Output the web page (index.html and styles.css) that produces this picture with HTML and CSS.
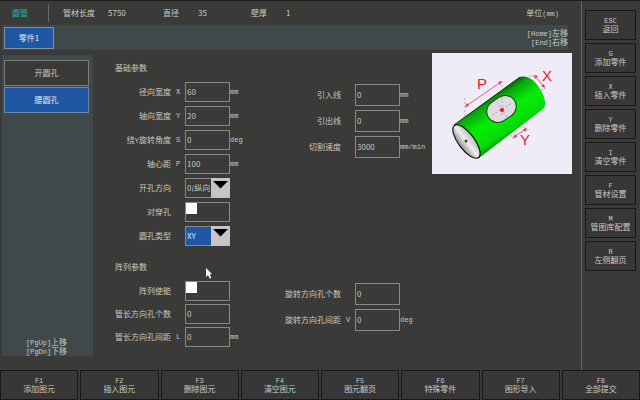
FILE: index.html
```
<!DOCTYPE html>
<html lang="zh-CN">
<head>
<meta charset="utf-8">
<title>圆管</title>
<link rel="stylesheet" href="styles.css">
</head>
<body>
<div class="upper">
  <div class="workspace">
    <header class="status">
      <h1 class="shape">圆管</h1>
      <dl class="specs">
        <div class="spec spec-long"><dt>管材长度</dt><dd>5750</dd></div>
        <div class="spec"><dt>直径</dt><dd>35</dd></div>
        <div class="spec"><dt>壁厚</dt><dd>1</dd></div>
      </dl>
      <p class="unit-note">单位<span class="mono">(mm)</span></p>
    </header>
    <nav class="tabs">
      <button class="tab" type="button">零件1</button>
      <p class="hint hint-right"><span class="mono">[Home]</span>左移<br><span class="mono">[End]</span>右移</p>
    </nav>
    <div class="body">
      <aside class="holes">
        <button class="hole" type="button">开圆孔</button>
        <button class="hole active" type="button">腰圆孔</button>
        <p class="hint hint-bottom"><span class="mono">[PgUp]</span>上移<br><span class="mono">[PgDn]</span>下移</p>
      </aside>
      <form class="params">
        <section>
          <h2>基础参数</h2>
          <div class="columns">
            <div class="fields">
              <div class="field"><label for="bx">径向宽度</label><span class="key mono">X</span><input id="bx" type="text" value="60"><span class="mono">mm</span></div>
              <div class="field"><label for="by">轴向宽度</label><span class="key mono">Y</span><input id="by" type="text" value="20"><span class="mono">mm</span></div>
              <div class="field"><label for="bs">绕<span class="mono">Y</span>旋转角度</label><span class="key mono">S</span><input id="bs" type="text" value="0"><span class="mono">deg</span></div>
              <div class="field"><label for="bp">轴心距</label><span class="key mono">P</span><input id="bp" type="text" value="100"><span class="mono">mm</span></div>
              <div class="field"><label for="dir">开孔方向</label><span class="key"></span><span class="drop"><select id="dir"><option>0(纵向</option></select><svg viewBox="0 0 19 20" aria-hidden="true"><path d="M2 3h15L9.500 10.500z"/></svg></span></div>
              <div class="field"><label for="thru">对穿孔</label><span class="key"></span><input id="thru" class="tick" type="checkbox"></div>
              <div class="field"><label for="kind">圆孔类型</label><span class="key"></span><span class="drop selected"><select id="kind"><option>XY</option></select><svg viewBox="0 0 19 20" aria-hidden="true"><path d="M2 3h15L9.500 10.500z"/></svg></span></div>
            </div>
            <div class="fields wide">
              <div class="field"><label for="lin">引入线</label><span class="key"></span><input id="lin" type="text" value="0"><span class="mono">mm</span></div>
              <div class="field"><label for="lout">引出线</label><span class="key"></span><input id="lout" type="text" value="0"><span class="mono">mm</span></div>
              <div class="field"><label for="speed">切割速度</label><span class="key"></span><input id="speed" type="text" value="3000"><span class="mono">mm/min</span></div>
            </div>
          </div>
        </section>
        <section>
          <h2>阵列参数</h2>
          <div class="columns">
            <div class="fields tight">
              <div class="field"><label for="arr">阵列使能</label><span class="key"></span><input id="arr" class="tick" type="checkbox"></div>
              <div class="field"><label for="ln">管长方向孔个数</label><span class="key"></span><input id="ln" type="text" value="0"></div>
              <div class="field"><label for="ll">管长方向孔间距</label><span class="key mono">L</span><input id="ll" type="text" value="0"><span class="mono">mm</span></div>
            </div>
            <div class="fields wide">
              <div class="field"><label for="rn">旋转方向孔个数</label><span class="key"></span><input id="rn" type="text" value="0"></div>
              <div class="field"><label for="rv">旋转方向孔间距</label><span class="key mono">V</span><input id="rv" type="text" value="0"><span class="mono">deg</span></div>
            </div>
          </div>
        </section>
      </form>
      <figure class="preview">
        <svg viewBox="0 0 140 121" role="img" aria-label="腰圆孔">
          <defs>
            <linearGradient id="tube" x1="45" y1="50" x2="72" y2="92" gradientUnits="userSpaceOnUse">
              <stop offset="0" stop-color="#064f08"/><stop offset=".15" stop-color="#08a90b"/><stop offset=".45" stop-color="#04ee05"/><stop offset=".8" stop-color="#05dc08"/><stop offset="1" stop-color="#0a7a0c"/>
            </linearGradient>
            <linearGradient id="bore" x1="0" y1="0" x2="1" y2="0"><stop offset="0" stop-color="#8d8d90"/><stop offset=".5" stop-color="#eee"/><stop offset="1" stop-color="#bbb"/></linearGradient>
          </defs>
          <path d="M22 72L88 24C95 22 103 27 108 36C113 44 115 52 111 56L47 105C40 105 21 82 22 72z" fill="url(#tube)"/>
          <path d="M22 72L88 24" fill="none" stroke="#073b08"/>
          <ellipse cx="34.500" cy="88.500" rx="8" ry="20" transform="rotate(-37 34.500 88.500)" fill="url(#bore)" stroke="#111" stroke-width="1.200"/>
          <circle cx="34" cy="88" r="1.500" fill="#4a3a20"/>
          <rect x="54" y="45" width="31" height="22" rx="11" transform="rotate(-34 69.500 56)" fill="#dedce0" stroke="#173d18"/>
          <path d="M70 28V62M60 62L80 50M65 49l10 15M33 45V63" stroke="#888" stroke-width=".6" stroke-dasharray="2 2" fill="none"/>
          <circle cx="70" cy="57" r="2" fill="#f01020"/>
          <g stroke="#e33a4d" fill="#e33a4d" stroke-width=".8">
            <path d="M34 53L69 29M103 23L112 34M82 84L94 76"/>
            <path d="M33 54l2-4 2 3zM70 28l-4 1 2 3zM102 22l4 1-3 3zM113 35l-1-4-3 2zM81 85l2-4 2 3zM95 75l-4 1 2 3z" stroke="none"/>
          </g>
          <path d="M97 23h5M109 37l5-2M79 82l3 4M92 74l4 4" stroke="#888" stroke-width=".7" stroke-dasharray="2 1"/>
          <text x="45" y="36">P</text><text x="110" y="28">X</text><text x="88" y="92">Y</text>
        </svg>
      </figure>
    </div>
  </div>
  <nav class="side">
    <button type="button"><span class="mono">ESC</span>返回</button>
    <button type="button"><span class="mono">G</span>添加零件</button>
    <button type="button"><span class="mono">X</span>插入零件</button>
    <button type="button"><span class="mono">Y</span>删除零件</button>
    <button type="button"><span class="mono">I</span>清空零件</button>
    <button type="button"><span class="mono">F</span>管材设置</button>
    <button type="button"><span class="mono">M</span>管图库配置</button>
    <button type="button"><span class="mono">R</span>左侧翻页</button>
  </nav>
</div>
<nav class="keys">
  <button type="button"><span class="mono">F1</span>添加图元</button>
  <button type="button"><span class="mono">F2</span>插入图元</button>
  <button type="button"><span class="mono">F3</span>删除图元</button>
  <button type="button"><span class="mono">F4</span>清空图元</button>
  <button type="button"><span class="mono">F5</span>图元翻页</button>
  <button type="button"><span class="mono">F6</span>特殊零件</button>
  <button type="button"><span class="mono">F7</span>图形导入</button>
  <button type="button"><span class="mono">F8</span>全部提交</button>
</nav>
<svg class="pointer" viewBox="0 0 7 11" aria-hidden="true"><path d="M0 0V9L2 7L4 11L5 10L4 6H6z"/></svg>
</body>
</html>
```
FILE: styles.css
```
* { box-sizing: border-box; margin: 0; padding: 0; }

body {
  display: flex;
  flex-direction: column;
  min-height: 100vh;
  background: #3a3b38;
  border-top: 1px solid #1b1c1b;
  color: #c6c9c5;
  font: 8px/8px "Noto Sans CJK SC", sans-serif;
}

button, input, select { font: inherit; color: inherit; border-radius: 0; }
h1, h2 { font: inherit; }
.mono { font-family: "Liberation Mono", monospace; font-size: 7px; }

.upper { display: flex; flex: 1; }
.workspace { display: flex; flex: 1; flex-direction: column; padding-left: 2px; }

.status { display: flex; align-items: center; height: 24px; padding: 0 22px 0 10px; }
.shape { width: 37px; height: 18px; line-height: 18px; border-right: 1px solid #666a67; color: #1fb5ae; }
.specs { display: flex; flex: 1; padding-left: 14px; }
.spec { display: flex; gap: 19px; width: 88px; }
.spec-long { gap: 13px; width: 100px; }

.tabs { display: flex; align-items: center; justify-content: space-between; height: 25px; margin-right: 13px; padding: 0 0 0 2px; background: #40494a; }
.tab { width: 50px; height: 22px; border: 1px solid #7f9097; background: #1f57a4; color: #dfe6ef; }
.hint-right { text-align: right; }

.body { display: flex; flex: 1; }
.holes { display: flex; flex-direction: column; gap: 1px; width: 91px; margin: 5px 0 14px; padding: 5px 4px 0 2px; background: #40494a; }
.hole { height: 26px; border: 1px solid #7b807d; background: #393a38; }
.hole.active { border-color: #6c86a5; background: #1f57a4; color: #dfe6ef; }
.hint-bottom { margin-top: auto; text-align: center; }

.params { display: flex; flex: 1; flex-direction: column; gap: 13px; padding: 10px 0 0 22px; }
.params h2 { line-height: 16px; }
.columns { display: grid; grid-template-columns: 170px 1fr; padding-top: 6px; }
.fields { display: flex; flex-direction: column; gap: 4px; }
.tight { gap: 3px; }
.wide { padding-top: 2px; }
.field { display: grid; grid-template-columns: 56px 14px 45px auto; align-items: center; height: 20px; }
.wide .field { height: 22px; }
.field label { text-align: right; white-space: nowrap; }
.key { text-align: center; }
.field input { width: 45px; height: 100%; padding: 0 0 2px 1px; border: 1px solid #858a86; background: none; }
.field .tick { appearance: none; background: linear-gradient(#fff, #fff) 0 0 / 12px 12px no-repeat border-box; }

.drop { position: relative; height: 20px; }
.drop select { width: 45px; height: 20px; padding: 0 19px 0 1px; border: 1px solid #858a86; background: none; appearance: none; overflow: hidden; }
.drop.selected select { background: #1f57a4; color: #dfe6ef; }
.drop svg { position: absolute; top: 0; right: 0; width: 19px; height: 20px; background: #c5c5c5; pointer-events: none; }

.preview { width: 140px; margin: 3px 9px 0 0; }
.preview svg { display: block; width: 100%; background: #efebf7; }
.preview text { fill: #e8202e; font: 15px "Liberation Sans", sans-serif; }

.side { display: flex; flex-direction: column; gap: 3px; width: 59px; padding: 9px 4px 0 3px; border-left: 1px solid #646866; }
.side button, .keys button { display: flex; flex-direction: column; align-items: center; justify-content: center; padding-bottom: 1px; border: 1px solid #171817; background: #363736; }
.side button { height: 30px; }
.keys { display: grid; grid-template-columns: repeat(8, 1fr); gap: 2px; height: 30px; }

.pointer { position: absolute; left: 206px; top: 268px; width: 7px; height: 11px; fill: #fff; }
```
